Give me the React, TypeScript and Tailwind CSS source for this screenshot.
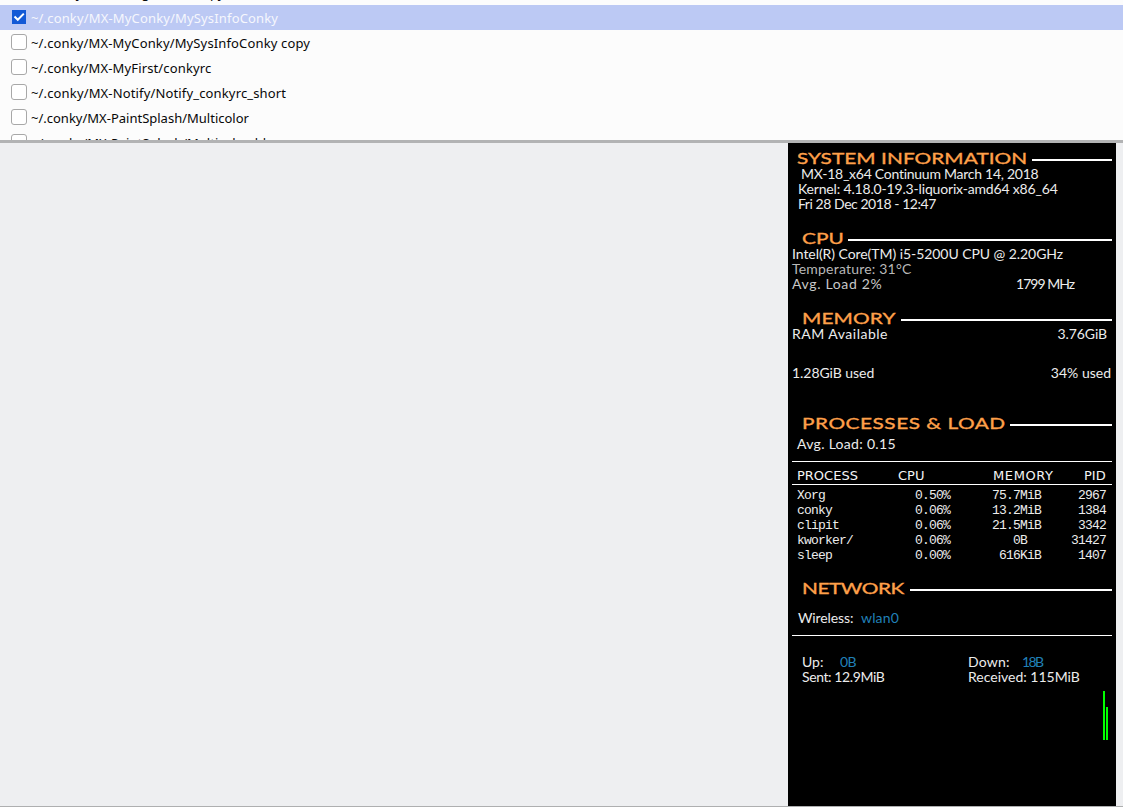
import { clsx } from 'clsx'

interface ConkyItem {
  path: string
  checked: boolean
  tracking?: string
}

interface ProcessRow {
  name: string
  cpu: string
  memory: string
  pid: string
}

const items: ConkyItem[] = [
  { path: '~/.conky/MX-Orange/main copy', checked: false },
  { path: '~/.conky/MX-MyConky/MySysInfoConky', checked: true, tracking: 'tracking-[0.16px]' },
  { path: '~/.conky/MX-MyConky/MySysInfoConky copy', checked: false, tracking: 'tracking-[0.14px]' },
  { path: '~/.conky/MX-MyFirst/conkyrc', checked: false, tracking: 'tracking-[0.14px]' },
  { path: '~/.conky/MX-Notify/Notify_conkyrc_short', checked: false, tracking: 'tracking-[0.15px]' },
  { path: '~/.conky/MX-PaintSplash/Multicolor', checked: false },
  { path: '~/.conky/MX-PaintSplash/Multicolor_bl', checked: false },
]

const processes: ProcessRow[] = [
  { name: 'Xorg', cpu: '0.50%', memory: '75.7MiB', pid: '2967' },
  { name: 'conky', cpu: '0.06%', memory: '13.2MiB', pid: '1384' },
  { name: 'clipit', cpu: '0.06%', memory: '21.5MiB', pid: '3342' },
  { name: 'kworker/', cpu: '0.06%', memory: '0B\u00a0\u00a0', pid: '31427' },
  { name: 'sleep', cpu: '0.00%', memory: '616KiB', pid: '1407' },
]

function Checkbox({ checked }: { checked: boolean }) {
  if (checked) {
    return (
      <span className="ml-3 mr-[5px] mt-[5px] h-3.5 w-3.5 shrink-0 bg-[#1259d6]">
        <svg viewBox="0 0 14 14" className="h-3.5 w-3.5" fill="none" stroke="white" strokeWidth="2">
          <path d="M2.5 6.5 L5.8 9.8 L11.8 3.6" />
        </svg>
      </span>
    )
  }
  return <span className="ml-[11px] mr-1 mt-1 h-4 w-4 shrink-0 rounded-[3px] border border-[#a8a8a8] bg-white" />
}

function ConkyList() {
  return (
    <div className="h-[143px] shrink-0 overflow-hidden border-b-[3px] border-[#b2b3b4] bg-[#fcfcfc]">
      <div className="-mt-5">
        {items.map((item) => (
          <div
            key={item.path}
            className={clsx('flex h-[25px]', item.checked ? 'bg-[#bcc9f4] text-[#f6f7fd]' : 'text-[#080808]')}
          >
            <Checkbox checked={item.checked} />
            <span className={clsx("whitespace-pre font-['Noto_Sans',sans-serif] text-[13px] leading-[26px]", item.tracking)}>
              {item.path}
            </span>
          </div>
        ))}
      </div>
    </div>
  )
}

interface HeadingProps {
  title: string
  textClass: string
  className?: string
}

function Heading({ title, textClass, className }: HeadingProps) {
  return (
    <div className={clsx('flex h-[15px] items-center pr-1', className)}>
      <h2 className={clsx('-mt-0.5 shrink-0 whitespace-pre font-[Lato,sans-serif] text-[16px] leading-[15px] text-[#ffa04a] [-webkit-text-stroke:0.35px_#ffa04a]', textClass)}>
        <span className="inline-block origin-left scale-x-[1.3]">{title}</span>
      </h2>
      <div className="mt-[3px] h-0.5 grow bg-white" />
    </div>
  )
}

function Rule({ className }: { className?: string }) {
  return <div className={clsx('mx-1 h-px bg-white', className)} />
}

function ConkyPanel() {
  return (
    <section className="w-[328px] whitespace-pre bg-black font-[Lato,sans-serif] text-[14px] font-normal leading-[15px] text-[#ececec]">
      <Heading title="SYSTEM INFORMATION" textClass="w-[235px] tracking-[0.04px]" className="mt-2 pl-[9px]" />
      <div className="pl-2.5">
        <p className="pl-[3px] tracking-[-0.26px]">MX-18_x64 Continuum March 14, 2018</p>
        <p className="tracking-[-0.17px]">Kernel: 4.18.0-19.3-liquorix-amd64 x86_64</p>
        <p className="tracking-[-0.45px]">Fri 28 Dec 2018 - 12:47</p>
      </div>

      <Heading title="CPU" textClass="w-[46px]" className="mt-5 pl-3.5" />
      <div className="pl-1">
        <p className="tracking-[-0.06px]">Intel(R) Core(TM) i5-5200U CPU @ 2.20GHz</p>
        <p className="tracking-[0.2px] text-[#b8b8b8]">Temperature: 31°C</p>
        <div className="flex justify-between pr-[42px]">
          <span className="tracking-[0.65px] text-[#c8c8c8]">Avg. Load 2%</span>
          <span className="tracking-[-1px]">1799 MHz</span>
        </div>
      </div>

      <Heading title="MEMORY" textClass="w-[99px] tracking-[0.1px]" className="mt-5 pl-3.5" />
      <div className="flex justify-between pl-1 pr-[9px]">
        <span className="tracking-[0.5px]">RAM Available</span>
        <span className="tracking-[-0.1px]">3.76GiB</span>
      </div>
      <div className="mt-6 flex justify-between pl-1 pr-[5px]">
        <span className="tracking-[-0.05px]">1.28GiB used</span>
        <span>34% used</span>
      </div>

      <Heading title="PROCESSES & LOAD" textClass="w-[208px] tracking-[0.4px]" className="mt-9 pl-3.5" />
      <p className="mt-[5px] pl-[9px] tracking-[0.3px]">Avg. Load: 0.15</p>

      <Rule className="mt-2.5" />
      <div className="mt-[6px] flex pl-[9px] font-['DejaVu_Sans',sans-serif] text-[13px] text-[#f4f4f4]">
        <span className="w-[101px]">PROCESS</span>
        <span className="w-[95px]">CPU</span>
        <span className="w-[91px] tracking-[0.6px]">MEMORY</span>
        <span>PID</span>
      </div>
      <Rule className="mt-[1px]" />

      <div className="mt-[3px] pl-[9px] pr-2.5 font-['Liberation_Mono',monospace] text-[13px] tracking-[-0.8px]">
        {processes.map((p) => (
          <div key={p.name} className="flex">
            <span className="w-[83px]">{p.name}</span>
            <span className="w-[70px] text-right">{p.cpu}</span>
            <span className="w-[91px] text-right">{p.memory}</span>
            <span className="grow text-right">{p.pid}</span>
          </div>
        ))}
      </div>

      <Heading title="NETWORK" textClass="w-[108px] tracking-[-0.35px]" className="mt-[18px] pl-3.5" />
      <p className="mt-3.5 flex pl-2.5">
        <span className="w-[63px] tracking-[-0.1px]">Wireless:</span>
        <span className="tracking-[0.15px] text-[#2080b8]">wlan0</span>
      </p>
      <Rule className="mt-2.5" />

      <div className="mt-[18px] flex pl-3.5">
        <div className="w-[166px]">
          <p className="flex">
            <span className="w-[38px]">Up:</span>
            <span className="tracking-[-0.7px] text-[#2080b8]">0B</span>
          </p>
          <p className="tracking-[-0.4px]">Sent: 12.9MiB</p>
        </div>
        <div>
          <p className="flex">
            <span className="w-[54px] tracking-[0.2px]">Down:</span>
            <span className="tracking-[-1.6px] text-[#2080b8]">18B</span>
          </p>
          <p>Received: 115MiB</p>
        </div>
      </div>

      <div className="mt-[7px] flex h-[49px] items-end justify-end gap-px pr-2">
        <div className="h-[49px] w-0.5 bg-[#00ff00]" />
        <div className="h-[33px] w-0.5 bg-[#00ff00]" />
      </div>
    </section>
  )
}

export default function App() {
  return (
    <main className="flex h-[807px] w-[1123px] flex-col overflow-hidden bg-[#eeeff1]">
      <ConkyList />
      <div className="flex grow justify-end border-b border-[#aeafb0] pr-[7px]">
        <ConkyPanel />
      </div>
    </main>
  )
}
